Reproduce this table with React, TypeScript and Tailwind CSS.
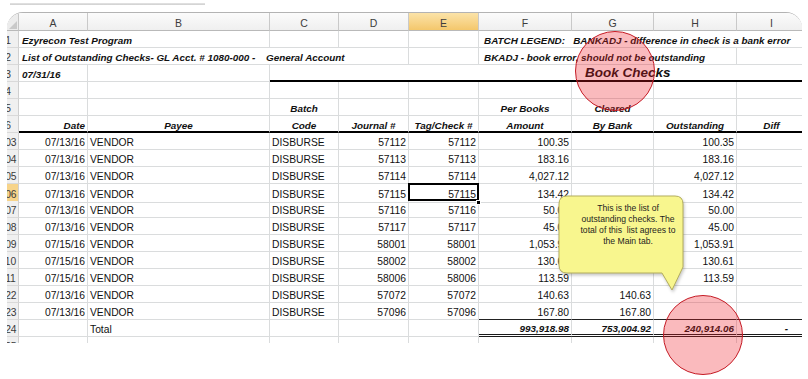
import React from "react";

const GRID = "grid grid-cols-[12px_69px_182px_69px_70px_70px_93px_82px_83px_70px]";
const SPAN: Record<number, string> = { 1: "", 2: "col-span-2", 3: "col-span-3", 4: "col-span-4", 7: "col-span-7" };
const GR = "border-r border-r-[#dadcdd]";
const GB = "border-b border-b-[#dadcdd]";
const DBL = "border-b-[3px] border-double border-b-[#1a1a1a]";

type CP = {
  t?: React.ReactNode;
  a?: "l" | "r" | "c" | "n";
  b?: boolean;
  span?: number;
  br?: string;
  bb?: string;
  cls?: string;
  sel?: boolean;
};

function Cell({ t, a = "l", b, span = 1, br = GR, bb = GB, cls = "pt-[4px]", sel }: CP) {
  const al =
    a === "r" ? "justify-end pr-[2px]" : a === "c" ? "justify-center" : a === "l" ? "justify-start pl-[2px]" : "";
  return (
    <div
      className={`flex items-center whitespace-pre ${sel ? "relative" : "overflow-hidden"} ${br} ${bb} ${al} ${
        b ? "font-bold italic text-[9.9px]" : ""
      } ${SPAN[span]} ${cls}`}
    >
      {t}
      {sel && (
        <>
          <div className="absolute z-10 -left-[1px] -top-[1px] w-[71px] h-[18px] border-2 border-black" />
          <div className="absolute z-10 -right-[3px] -bottom-[3px] w-[5px] h-[5px] bg-black border border-white" />
        </>
      )}
    </div>
  );
}

function RH({ n, hl }: { n: string; hl?: boolean }) {
  return (
    <div
      className={`flex items-center pt-[4px] overflow-hidden border-r border-r-[#cfcfcf] border-b border-b-[#d9d9d9] text-[#3a3a3a] ${
        hl ? "bg-[#f7d48a]" : "bg-[#f0f0f0]"
      }`}
    >
      <div className="shrink-0 w-[24px] -ml-[11px] text-center">{n}</div>
    </div>
  );
}

const ROW = `${GRID} h-[17px] leading-[14px]`;

const data: [string, string, string, string, string, string][] = [
  ["103", "07/13/16", "57112", "100.35", "", "100.35"],
  ["104", "07/13/16", "57113", "183.16", "", "183.16"],
  ["105", "07/13/16", "57114", "4,027.12", "", "4,027.12"],
  ["106", "07/13/16", "57115", "134.42", "", "134.42"],
  ["107", "07/13/16", "57116", "50.00", "", "50.00"],
  ["108", "07/13/16", "57117", "45.00", "", "45.00"],
  ["109", "07/15/16", "58001", "1,053.91", "", "1,053.91"],
  ["110", "07/15/16", "58002", "130.61", "", "130.61"],
  ["111", "07/15/16", "58006", "113.59", "", "113.59"],
  ["122", "07/13/16", "57072", "140.63", "140.63", ""],
  ["123", "07/13/16", "57096", "167.80", "167.80", ""],
];

const letters = ["A", "B", "C", "D", "E", "F", "G", "H", "I"];
const THICK = "border-b-2 border-b-black";

export default function App() {
  return (
    <div className="relative w-[808px] h-[379px] bg-white overflow-hidden font-['Liberation_Sans',Arial,sans-serif] text-[10.3px] text-[#111]">
      <div className="pt-[3px]">
        <div className="ml-[10px] w-[195px] h-[2px] bg-linear-to-b from-[#e4e4e4] to-[#cfcfcf]" />
        <div className="relative ml-[7px] mt-[7px] w-[795px] h-[331px] overflow-hidden rounded-t-[16px] border-t border-t-[#b3b3b3]">
          {/* column header */}
          <div className={`${GRID} h-[18px]`}>
            <div className="relative border-r border-r-[#c6c6c6] border-b border-b-[#b9b9b9] bg-[#ececec]">
              <svg className="absolute right-[1px] bottom-[1px]" width="8" height="8" viewBox="0 0 8 8">
                <polygon points="8,0 8,8 0,8" fill="#c9c9c9" />
              </svg>
            </div>
            {letters.map((l) => (
              <div
                key={l}
                className={`flex items-center justify-center pt-[3px] border-r border-r-[#c9c9c9] border-b border-b-[#b9b9b9] text-[10.5px] leading-[13px] text-[#3d3d3d] ${
                  l === "E" ? "bg-linear-to-b from-[#fbe3a8] to-[#f4c76b]" : "bg-linear-to-b from-[#fbfbfb] to-[#efefef]"
                }`}
              >
                {l}
              </div>
            ))}
          </div>

          {/* row 1 */}
          <div className={ROW}>
            <RH n="1" />
            <Cell span={2} b t="Ezyrecon Test Program" cls="pt-[4px] pl-[3px]" a="n" />
            <Cell />
            <Cell />
            <Cell />
            <Cell span={4} b a="n" cls="pt-[4px] pl-[5px]" t="BATCH LEGEND:   BANKADJ - difference in check is a bank error" />
          </div>
          {/* row 2 */}
          <div className={ROW}>
            <RH n="2" />
            <Cell
              span={4}
              b
              a="n"
              cls="pt-[4px] pl-[3px]"
              t={
                <>
                  <span className="inline-block w-[244px] shrink-0">List of Outstanding Checks- GL Acct. # 1080-000 -</span>
                  <span>General Account</span>
                </>
              }
            />
            <Cell />
            <Cell span={3} b a="n" cls="pt-[4px] pl-[5px]" t="BKADJ - book error, should not be outstanding" />
            <Cell />
          </div>
          {/* row 3 */}
          <div className={ROW}>
            <RH n="3" />
            <Cell b t="07/31/16" a="n" cls="pt-[4px] pl-[3px]" />
            <Cell />
            <Cell
              span={7}
              a="n"
              bb={THICK}
              cls="pl-[315px] font-bold italic text-[13.5px] pt-[1px]"
              t="Book Checks"
            />
          </div>
          {/* row 4 */}
          <div className={ROW}>
            <RH n="4" />
            {letters.map((l) => (
              <Cell key={l} />
            ))}
          </div>
          {/* row 5 */}
          <div className={ROW}>
            <RH n="5" />
            <Cell />
            <Cell />
            <Cell b a="c" t="Batch" />
            <Cell />
            <Cell />
            <Cell b a="c" t="Per Books" />
            <Cell b a="c" t="Cleared" />
            <Cell />
            <Cell />
          </div>
          {/* row 6 */}
          <div className={ROW}>
            <RH n="6" />
            <Cell b a="r" t="Date" bb={THICK} />
            <Cell b a="c" t="Payee" bb={THICK} />
            <Cell b a="c" t="Code" bb={THICK} />
            <Cell b a="c" t="Journal #" bb={THICK} />
            <Cell b a="c" t="Tag/Check #" bb={THICK} />
            <Cell b a="c" t="Amount" bb={THICK} />
            <Cell b a="c" t="By Bank" bb={THICK} />
            <Cell b a="c" t="Outstanding" bb={THICK} />
            <Cell b a="c" t="Diff" bb={THICK} />
          </div>

          {data.map(([n, d, j, amt, bank, out]) => {
            const last = n === "123";
            const bbT = last ? "border-b border-b-[#222]" : GB;
            return (
              <div key={n} className={ROW}>
                <RH n={n} hl={n === "106"} />
                <Cell a="r" t={d} />
                <Cell t="VENDOR" />
                <Cell t="DISBURSE" />
                <Cell a="r" t={j} />
                <Cell a="r" t={j} sel={n === "106"} />
                <Cell a="r" t={amt} bb={bbT} />
                <Cell a="r" t={bank} bb={bbT} />
                <Cell a="r" t={out} bb={bbT} />
                <Cell bb={bbT} />
              </div>
            );
          })}

          {/* total */}
          <div className={ROW}>
            <RH n="124" />
            <Cell />
            <Cell t="Total" />
            <Cell />
            <Cell />
            <Cell />
            <Cell b a="r" t="993,918.98" bb={DBL} />
            <Cell b a="r" t="753,004.92" bb={DBL} />
            <Cell b a="r" t="240,914.06" bb={DBL} />
            <Cell b a="n" cls="pt-[4px] justify-end pr-[18px]" t="-" bb={DBL} />
          </div>
          <div className={ROW}>
            <RH n="125" />
            {letters.map((l) => (
              <Cell key={l} />
            ))}
          </div>
        </div>
      </div>

      {/* callout */}
      <svg
        className="absolute left-[553px] top-[190px] drop-shadow-[1px_2px_1.5px_rgba(0,0,0,0.22)]"
        width="140"
        height="106"
        viewBox="0 0 140 106"
      >
        <path
          d="M14,6 H122 Q130,6 130,14 V77 L119,100 L109,83 H14 Q6,83 6,75 V14 Q6,6 14,6 Z"
          fill="#f8f68e"
          stroke="#b3ad5c"
          strokeWidth="1"
        />
      </svg>
      <div className="absolute left-[563px] top-[196px] w-[130px] pt-[7px] text-center text-[8.6px] leading-[11px] text-[#1e1e1e]">
        This is the list of
        <br />
        outstanding checks. The
        <br />
        total of this&nbsp; list agrees to
        <br />
        the Main tab.
      </div>

      {/* red circles */}
      <div className="absolute left-[575px] top-[31px] w-[80px] h-[80px] rounded-full bg-[rgba(237,28,36,0.3)] border border-[#c51a24]" />
      <div className="absolute left-[663px] top-[295px] w-[80px] h-[80px] rounded-full bg-[rgba(237,28,36,0.3)] border border-[#c51a24]" />
    </div>
  );
}
